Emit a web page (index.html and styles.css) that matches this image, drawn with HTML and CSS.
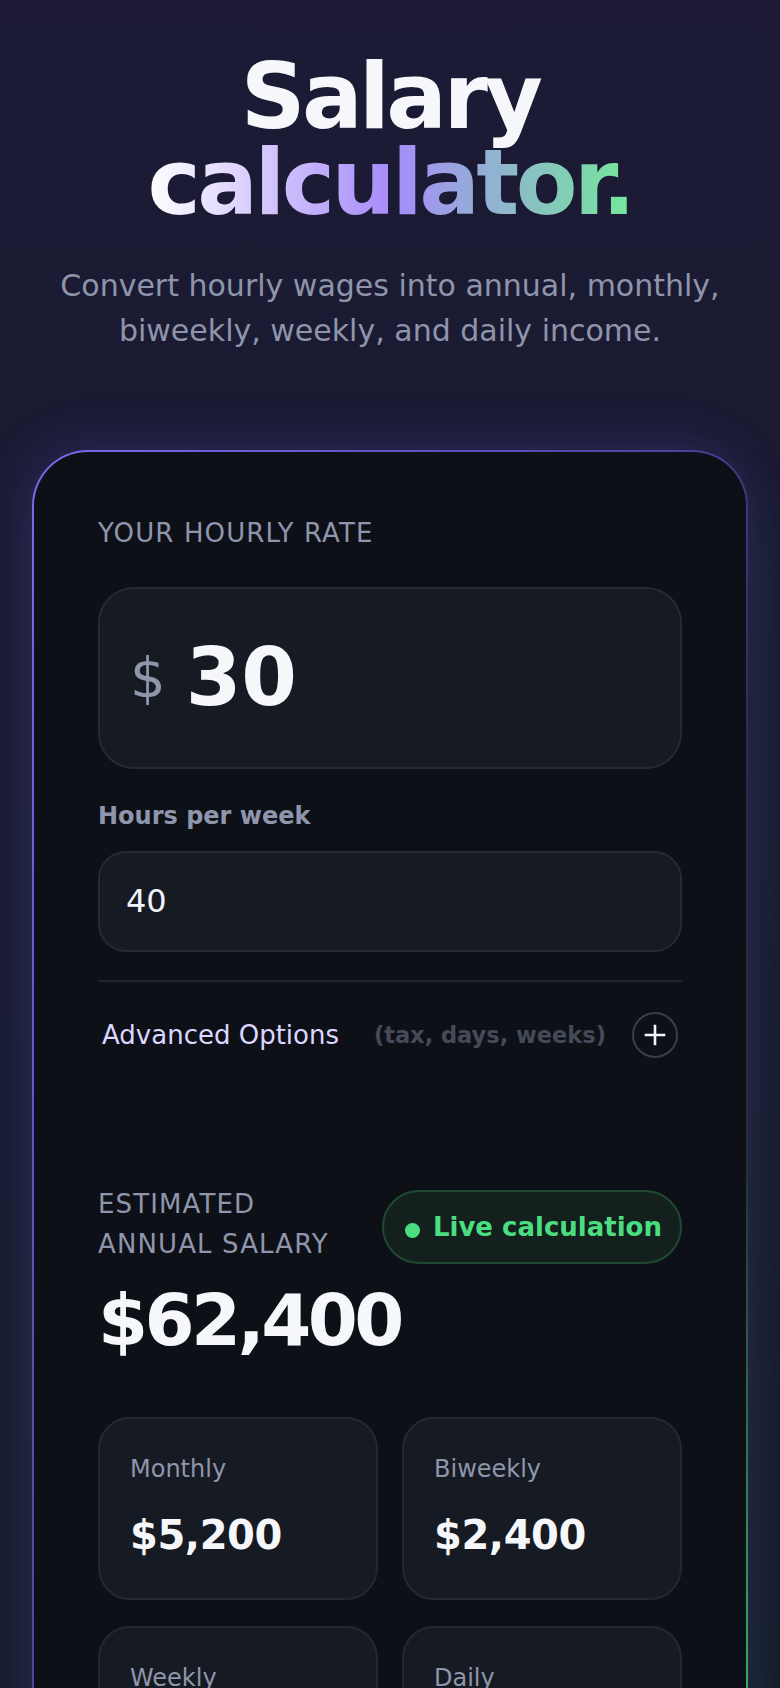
FILE: index.html
```html
<!DOCTYPE html>
<html lang="en">
<head>
  <meta charset="UTF-8">
  <title>Salary calculator</title>
  <meta name="viewport" content="width=device-width, initial-scale=1">
  <link rel="stylesheet" href="styles.css">
</head>
<body>
  <header class="hero">
    <h1>
      <span class="line">Salary</span>
      <span class="line"><span class="grad">calculator.</span></span>
    </h1>
    <p class="lead">Convert hourly wages into annual, monthly, biweekly, weekly, and daily income.</p>
  </header>

  <main class="card">
    <label class="eyebrow rate-label" for="rate">Your hourly rate</label>
    <div class="rate-field">
      <span class="currency">$</span>
      <input type="number" id="rate" value="30" min="0" step="0.5">
    </div>

    <label class="field-label" for="hours">Hours per week</label>
    <input class="text-field" type="number" id="hours" value="40" min="0">

    <details class="advanced">
      <summary>
        <span class="adv-title">Advanced Options</span>
        <span class="adv-hint">(tax, days, weeks)</span>
        <span class="adv-toggle">
          <svg width="22" height="22" viewBox="0 0 22 22" aria-hidden="true">
            <path d="M11 2v18M2 11h18" stroke="#f6f7fb" stroke-width="2.6" stroke-linecap="square" fill="none"/>
          </svg>
        </span>
      </summary>
      <div class="adv-grid">
        <label>Tax rate (%)<input class="text-field small" type="number" id="tax" value="0" min="0" max="100"></label>
        <label>Days per week<input class="text-field small" type="number" id="days" value="5" min="1" max="7"></label>
        <label>Weeks per year<input class="text-field small" type="number" id="weeks" value="52" min="1" max="52"></label>
      </div>
    </details>

    <section class="results">
      <div class="results-head">
        <p class="eyebrow">Estimated annual salary</p>
        <span class="live"><span class="dot"></span>Live calculation</span>
      </div>
      <div class="annual" id="annual">$62,400</div>

      <div class="breakdown">
        <div class="stat">
          <span class="stat-label">Monthly</span>
          <span class="stat-value" id="monthly">$5,200</span>
        </div>
        <div class="stat">
          <span class="stat-label">Biweekly</span>
          <span class="stat-value" id="biweekly">$2,400</span>
        </div>
        <div class="stat">
          <span class="stat-label">Weekly</span>
          <span class="stat-value" id="weekly">$1,200</span>
        </div>
        <div class="stat">
          <span class="stat-label">Daily</span>
          <span class="stat-value" id="daily">$240</span>
        </div>
      </div>
    </section>
  </main>

  <script>
    function money(n) {
      return "$" + Math.round(n).toLocaleString("en-US");
    }

    function num(id, fallback) {
      const v = parseFloat(document.getElementById(id).value);
      return isNaN(v) ? fallback : v;
    }

    function calculate() {
      const rate = num("rate", 0);
      const hours = num("hours", 0);
      const tax = num("tax", 0) / 100;
      const days = num("days", 5) || 5;
      const weeks = num("weeks", 52);

      const weekly = rate * hours * (1 - tax);
      const annual = weekly * weeks;

      document.getElementById("annual").innerText = money(annual);
      document.getElementById("monthly").innerText = money(annual / 12);
      document.getElementById("biweekly").innerText = money(weekly * 2);
      document.getElementById("weekly").innerText = money(weekly);
      document.getElementById("daily").innerText = money(weekly / days);
    }

    ["rate", "hours", "tax", "days", "weeks"].forEach(id => {
      document.getElementById(id).addEventListener("input", calculate);
    });

    calculate();
  </script>
</body>
</html>
```

FILE: styles.css
```css
* {
  box-sizing: border-box;
}

body {
  margin: 0;
  padding: 54px 32px 96px;
  min-height: 100vh;
  font-family: "DejaVu Sans", "Noto Sans", sans-serif;
  color: #f6f7fb;
  background: linear-gradient(180deg, #1c1a35 0%, #1a1b31 45%, #161c29 100%) fixed;
}

.hero {
  text-align: center;
}

h1 {
  margin: 0;
  font-size: 90px;
  line-height: 0.96;
  font-weight: 700;
  letter-spacing: -0.04em;
  color: #f6f7fb;
}

h1 .line {
  display: block;
}

.grad {
  display: inline-block;
  background: linear-gradient(90deg, #ffffff 0%, #a78bfa 50%, #74e89a 100%);
  -webkit-background-clip: text;
  background-clip: text;
  color: transparent;
}

.lead {
  margin: 36px 0 0;
  font-size: 30px;
  line-height: 1.5;
  color: #8e95aa;
}

/* main card */
.card {
  margin-top: 97px;
  padding: 66px 64px 64px;
  border: 2px solid transparent;
  border-radius: 56px;
  background:
    linear-gradient(#0e1018, #0e1018) padding-box,
    linear-gradient(to bottom right, #7c6af0 0%, #4e42a0 45%, #2d2b52 60%, #272e3a 75%, #2f8a58 88%, #3fcf7f 100%) border-box;
  box-shadow: -6px -6px 50px rgba(108, 92, 231, 0.2), 8px 24px 60px rgba(52, 160, 140, 0.08);
}

.eyebrow {
  display: block;
  margin: 0;
  font-size: 26px;
  line-height: 30px;
  letter-spacing: 0.043em;
  text-transform: uppercase;
  color: #8f96ab;
}

.rate-label {
  margin-bottom: 39px;
}

.rate-field {
  display: flex;
  align-items: center;
  gap: 20px;
  height: 182px;
  padding: 0 30px;
  background: #161a22;
  border: 2px solid #262a33;
  border-radius: 36px;
}

.currency {
  font-size: 56px;
  line-height: 1;
  color: #8f96ab;
}

input {
  font-family: inherit;
  outline: none;
}

input::-webkit-inner-spin-button,
input::-webkit-outer-spin-button {
  -webkit-appearance: none;
  margin: 0;
}

.rate-field input {
  flex: 1;
  min-width: 0;
  padding: 0;
  border: 0;
  background: none;
  font-size: 80px;
  font-weight: 700;
  line-height: 1;
  color: #f6f7fb;
}

.field-label {
  display: block;
  margin: 31px 0 18px;
  font-size: 24px;
  font-weight: 700;
  line-height: 33px;
  color: #8f96ab;
}

.text-field {
  display: block;
  width: 100%;
  height: 101px;
  padding: 0 26px;
  font-size: 32px;
  color: #f1f3f8;
  background: #161a22;
  border: 2px solid #262a33;
  border-radius: 28px;
}

/* advanced options */
.advanced {
  margin-top: 28px;
  border-top: 2px solid #20232c;
}

.advanced summary {
  display: flex;
  align-items: center;
  gap: 26px;
  padding: 30px 4px 0;
  list-style: none;
  cursor: pointer;
}

.advanced summary::-webkit-details-marker {
  display: none;
}

.adv-title {
  font-size: 26px;
  color: #ddd6fe;
}

.adv-hint {
  margin-left: auto;
  font-size: 22.5px;
  font-weight: 700;
  color: #454a57;
}

.adv-toggle {
  display: flex;
  align-items: center;
  justify-content: center;
  width: 46px;
  height: 46px;
  border: 2px solid #3a3e48;
  border-radius: 50%;
}

.advanced[open] .adv-toggle svg {
  transform: rotate(45deg);
}

.adv-grid {
  display: grid;
  gap: 16px;
  margin-top: 24px;
}

.adv-grid label {
  font-size: 20px;
  font-weight: 700;
  color: #8f96ab;
}

.text-field.small {
  height: 72px;
  margin-top: 8px;
  font-size: 26px;
}

/* results */
.results {
  margin-top: 126px;
}

.results-head {
  display: flex;
  align-items: flex-end;
  justify-content: space-between;
  gap: 24px;
}

.results-head .eyebrow {
  line-height: 40px;
}

.live {
  display: inline-flex;
  align-items: center;
  gap: 13px;
  padding: 20px 18px 20px 21px;
  font-size: 26px;
  font-weight: 700;
  line-height: 30px;
  white-space: nowrap;
  color: #4ade80;
  background: #13201e;
  border: 2px solid #1f4a30;
  border-radius: 999px;
}

.dot {
  width: 15px;
  height: 15px;
  margin-top: 8px;
  border-radius: 50%;
  background: #4ade80;
}

.annual {
  margin-top: 20px;
  font-size: 72px;
  font-weight: 700;
  line-height: 1;
  letter-spacing: -0.05em;
  color: #f6f7fb;
}

.breakdown {
  display: grid;
  grid-template-columns: 1fr 1fr;
  gap: 26px 24px;
  margin-top: 61px;
}

.stat {
  padding: 32px 30px 39px;
  background: #161a22;
  border: 2px solid #252831;
  border-radius: 32px;
}

.stat-label {
  display: block;
  font-size: 24px;
  line-height: 36px;
  color: #8f96ab;
}

.stat-value {
  display: block;
  margin-top: 24px;
  font-size: 40px;
  font-weight: 700;
  line-height: 48px;
  letter-spacing: -0.01em;
  color: #f6f7fb;
}
```
